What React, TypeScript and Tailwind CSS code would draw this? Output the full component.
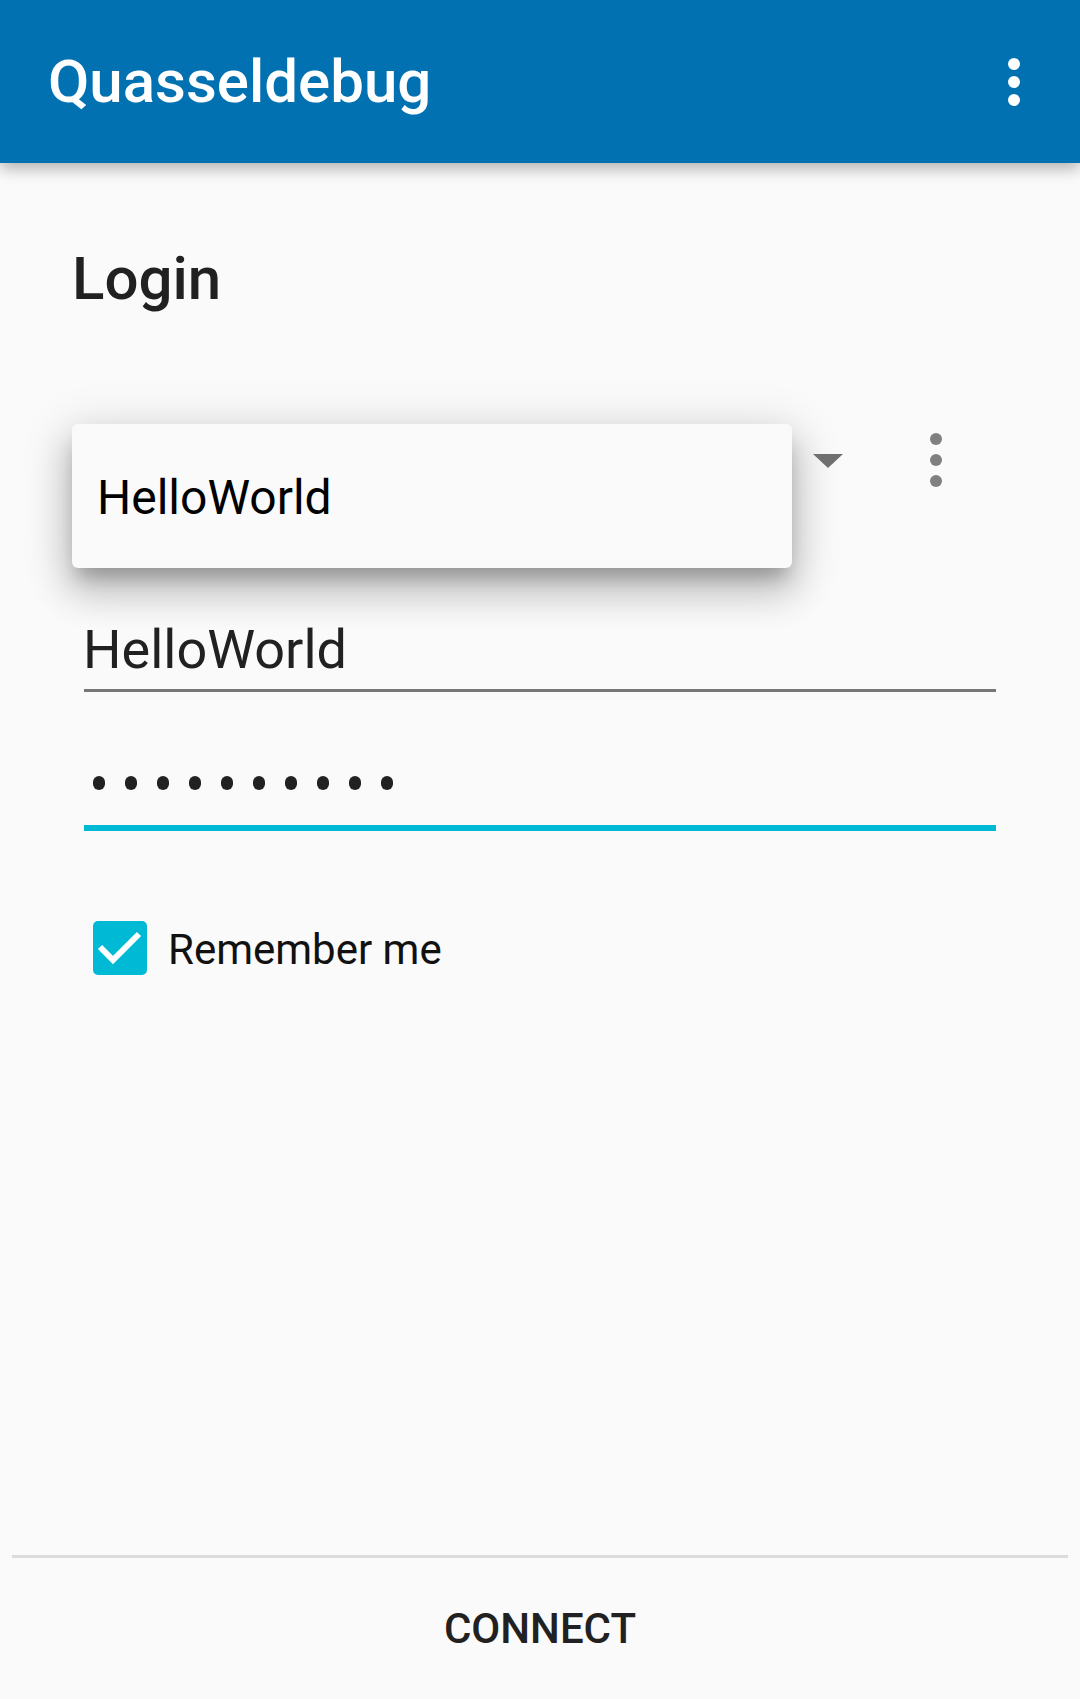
import React, { useState } from 'react';

export default function App() {
  const [remember, setRemember] = useState(true);
  const [password] = useState('helloworld');

  return (
    <div
      className="min-h-[1699px] flex flex-col bg-[#fafafa]"
      style={{ fontFamily: 'Roboto, "Noto Sans", sans-serif' }}
    >
      {/* App bar */}
      <header className="relative z-10 h-[163px] shrink-0 flex items-center justify-between bg-[#0271b2] pl-[48px] shadow-[0_6px_14px_rgba(0,0,0,0.28)]">
        <h1 className="text-[60px] leading-[60px] font-medium text-white">Quasseldebug</h1>
        <button className="w-[60px] mr-[36px] h-[60px] flex flex-col items-center justify-center gap-[6px]">
          <span className="w-[12px] h-[12px] rounded-full bg-white" />
          <span className="w-[12px] h-[12px] rounded-full bg-white" />
          <span className="w-[12px] h-[12px] rounded-full bg-white" />
        </button>
      </header>

      {/* Login form */}
      <main className="flex flex-col">
        <h2 className="mt-[86px] ml-[72px] text-[60px] leading-[60px] font-medium text-[#212121]">Login</h2>

        {/* Account spinner with open dropdown */}
        <div className="mt-[115px] flex items-start">
          <div className="ml-[72px] w-[720px] h-[144px] rounded-[6px] bg-[#fafafa] flex items-center pl-[25px] pt-[4px] shadow-[0_24px_38px_3px_rgba(0,0,0,0.16),0_9px_46px_8px_rgba(0,0,0,0.12),0_14px_18px_-6px_rgba(0,0,0,0.24)]">
            <span className="text-[48px] leading-[48px] text-black">HelloWorld</span>
          </div>
          <svg className="ml-[21px] mt-[30px]" width="30" height="14" viewBox="0 0 30 14">
            <path d="M0 0 L30 0 L15 14 Z" fill="#707070" />
          </svg>
          <div className="ml-[87px] mt-[9px] flex flex-col items-center gap-[9px]">
            <span className="w-[12px] h-[12px] rounded-full bg-[#808080]" />
            <span className="w-[12px] h-[12px] rounded-full bg-[#808080]" />
            <span className="w-[12px] h-[12px] rounded-full bg-[#808080]" />
          </div>
        </div>

        {/* Username */}
        <div className="mt-[55px] ml-[84px] w-[912px]">
          <div className="-ml-[1px] text-[54px] leading-[54px] text-[#212121]">HelloWorld</div>
          <div className="mt-[12px] h-[3px] bg-[#767676]" />
        </div>

        {/* Password */}
        <div className="mt-[84px] ml-[84px] w-[912px]">
          <div className="flex gap-[20px] pl-[9px] h-[14px]">
            {password.split('').map((_, i) => (
              <span key={i} className="w-[12px] h-[14px] rounded-full bg-[#212121]" />
            ))}
          </div>
          <div className="mt-[35px] h-[6px] bg-[#00bad5]" />
        </div>

        {/* Remember me */}
        <label className="mt-[90px] ml-[93px] flex items-center gap-[21px] cursor-pointer">
          <button
            onClick={() => setRemember(!remember)}
            className={`w-[54px] h-[54px] rounded-[5px] flex items-center justify-center ${
              remember ? 'bg-[#00bad5]' : 'border-[5px] border-[#757575]'
            }`}
          >
            {remember && (
              <svg width="54" height="54" viewBox="0 0 54 54">
                <path d="M7 26 L20 39 L46 13" fill="none" stroke="white" strokeWidth="6" />
              </svg>
            )}
          </button>
          <span className="mt-[3px] text-[42px] leading-[42px] text-[#111111]">Remember me</span>
        </label>
      </main>

      <div className="flex-1" />

      {/* Bottom action */}
      <div className="ml-[12px] w-[1056px] h-[3px] bg-[#dcdcdc]" />
      <div className="h-[141px] w-full flex items-center justify-center">
        <button className="text-[42px] leading-[42px] font-medium text-[#212121]">CONNECT</button>
      </div>
    </div>
  );
}
